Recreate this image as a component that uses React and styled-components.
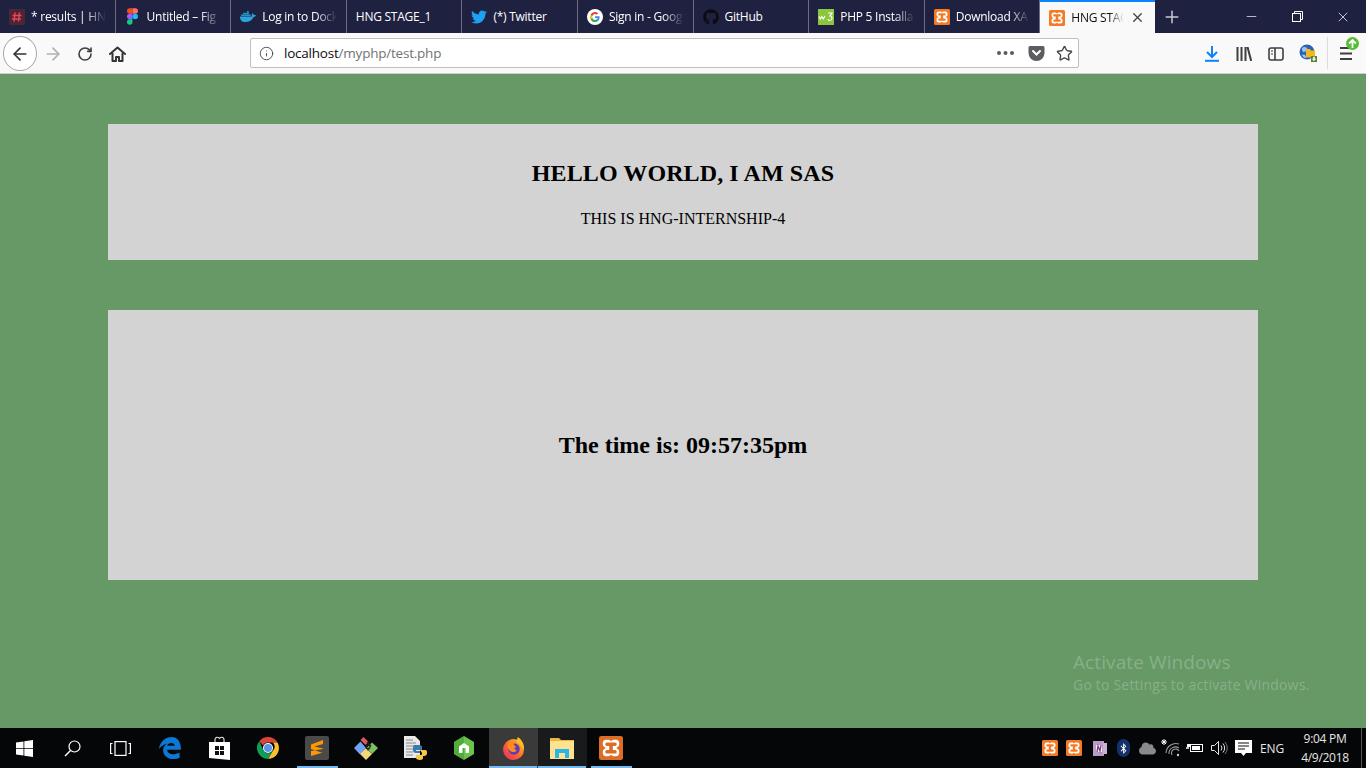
import React from "react";
import styled, { createGlobalStyle } from "styled-components";
import { ArrowLeft, ArrowRight, RotateCw, Info, Star, Plus, X, Minus } from "lucide-react";
import { FaTwitter, FaGithub, FaDocker, FaCloud, FaBluetoothB } from "react-icons/fa";

const Global = createGlobalStyle`
  html, body { margin: 0; padding: 0; background: #fff; }
  #root { width: 1366px; height: 768px; overflow: hidden; }
`;
const UI = `"Open Sans", "Noto Sans", sans-serif`;

const Screen = styled.div`
  position: relative; width: 1366px; height: 768px; display: flex; flex-direction: column;
  font-family: ${UI};
`;
const TabBar = styled.div`display: flex; height: 33px; background: #1f2141; align-items: stretch; flex: none;`;
const Tab = styled.div`
  width: ${p => (p.$active ? 115 : 115.6)}px; flex: none; box-sizing: border-box; display: flex; align-items: center;
  padding: 0 9px; gap: 6px; position: relative;
  background: ${p => (p.$active ? "#f9f9fa" : "transparent")};
  border-top: ${p => (p.$active ? "2px solid #0a84ff" : "none")};
  border-right: ${p => (p.$active ? "none" : "1px solid #6d6e83")};
  color: ${p => (p.$active ? "#0c0c0d" : "#fff")};
`;
const TabIcon = styled.span`width: 16px; height: 16px; flex: none; display: flex; align-items: center; justify-content: center;`;
const TabTitle = styled.span`
  font-size: 12px; white-space: nowrap; overflow: hidden; flex: 1; letter-spacing: -0.25px; line-height: 16px;
  ${p => p.$fade && `
    -webkit-mask-image: linear-gradient(to right, #000 72%, transparent 100%);
    mask-image: linear-gradient(to right, #000 72%, transparent 100%);
  `}
`;
const TabClose = styled.span`display: flex; color: #444; margin-right: 1px;`;
const NewTab = styled.div`width: 34px; display: flex; align-items: center; justify-content: center; color: #c9c9d0;`;
const WindowControls = styled.div`display: flex; margin-left: auto;`;
const WinBtn = styled.div`width: 46px; height: 33px; display: flex; align-items: center; justify-content: center; color: #fff;`;

const Toolbar = styled.div`
  height: 40px; flex: none; background: #f9f9fa; border-bottom: 1px solid #cfcfd2;
  display: flex; align-items: center; padding-left: 3px; padding-right: 4px;
`;
const BackBtn = styled.div`
  width: 32px; height: 33px; border-radius: 50%; border: 1px solid #a8a8ab; background: #fff; color: #333;
  display: flex; align-items: center; justify-content: center; flex: none; margin-top: 1px;
`;
const ToolBtn = styled.div`
  width: 32px; height: 32px; flex: none; display: flex; align-items: center; justify-content: center; position: relative;
  color: ${p => p.$color || "#3f3f41"}; margin-top: 1px;
`;
const UrlBar = styled.div`
  width: 829px; height: 30px; box-sizing: border-box; margin-left: 117px; flex: none; background: #fff;
  border: 1px solid #bfbfc2; border-radius: 2px; display: flex; align-items: center; padding: 0 5px 0 8px; margin-top: 0;
`;
const UrlText = styled.div`font-size: 13.5px; color: #0c0c0d; margin-left: 10px; letter-spacing: -0.22px; flex: 1;`;
const UrlPath = styled.span`color: #737373;`;
const UrlIcons = styled.div`display: flex; align-items: center; gap: 11px; color: #4a4a4f;`;
const Dots = styled.svg`margin-right: 3px;`;
const ToolRight = styled.div`display: flex; align-items: center; margin-left: auto;`;
const ToolSep = styled.div`width: 1px; height: 32px; background: #dcdcde; margin: 0 2px 0 3px;`;
const UpdateBadge = styled.span`
  position: absolute; top: -1px; right: 3px; width: 13px; height: 13px; border-radius: 50%; background: #57bd35;
  display: flex; align-items: center; justify-content: center; color: #fff;
`;

const Page = styled.main`
  flex: 1; background: #669966; display: flex; flex-direction: column; align-items: center; gap: 50px; padding-top: 50px;
  font-family: "Liberation Serif", serif; color: #000;
`;
const Panel = styled.section`
  width: 1150px; height: ${p => p.$h}px; background: #d3d3d3; display: flex; flex-direction: column;
  align-items: center; justify-content: center;
`;
const Heading = styled.h2`font-size: 24px; line-height: 27px; margin: 0; font-weight: bold;`;
const Greeting = styled(Heading)`letter-spacing: 0.1px;`;
const Sub = styled.p`font-size: 16px; line-height: 18px; margin: 23px 0 0;`;
const PanelHead = styled(Panel)`justify-content: flex-start; padding-top: 36px; box-sizing: border-box;`;

const Watermark = styled.div`
  position: absolute; left: 1073px; top: 650px; color: rgba(255,255,255,0.24); font-family: "Open Sans", sans-serif;
`;
const WmTitle = styled.div`font-size: 19px; line-height: 24px; letter-spacing: 0.1px;`;
const WmSub = styled.div`font-size: 14px; line-height: 21px; letter-spacing: 0.2px;`;

const Taskbar = styled.footer`
  height: 40px; flex: none; background: #050607; display: flex; align-items: stretch; color: #fff;
`;
const Start = styled.div`width: 48px; flex: none; display: flex; align-items: center; justify-content: center;`;
const Apps = styled.div`display: flex; margin-left: 1.5px;`;
const AppSlot = styled.div`
  width: 49px; flex: none; position: relative; display: flex; align-items: center; justify-content: center;
  background: ${p => (p.$active ? "#3a3a3b" : p.$open ? "#191a1b" : "transparent")};
  &::after {
    content: ""; position: absolute; bottom: 0; height: 2px; background: #76b9ed;
    display: ${p => (p.$open || p.$running ? "block" : "none")};
    left: ${p => (p.$running ? "4px" : "0")}; right: ${p => (p.$running ? "4px" : "1px")};
  }
`;
const Tray = styled.div`display: flex; align-items: center; margin-left: auto; height: 100%;`;
const TrayItem = styled.div`width: ${p => p.$w || 24}px; flex: none; display: flex; justify-content: center; align-items: center; color: #d8d8d8;`;
const BtOval = styled.span`
  width: 13px; height: 18px; border-radius: 7px; background: #13316b; display: flex; align-items: center; justify-content: center; color: #fff;
`;
const Lang = styled.div`width: 34px; text-align: center; font-size: 12px; color: #e6e6e6; letter-spacing: -0.2px;`;
const Clock = styled.div`width: 72px; text-align: center; font-size: 12px; line-height: 19px; color: #e6e6e6; letter-spacing: -0.3px;`;
const ShowDesk = styled.div`width: 4px; height: 100%; border-left: 1px solid #555;`;

/* ---------- drawn icons ---------- */
const Xampp = ({ s = 16, fill = "#f57a26" }) => (
  <svg width={s} height={s} viewBox="0 0 16 16">
    <rect width="16" height="16" rx="1.500" fill={fill} />
    <path d="M4.600 2.500h1.800c.7 0 1 .8 1.600.8s.9-.8 1.600-.8h1.800c1.300 0 2.100 1 2.100 2.300v.6c0 1.200-.7 2-1.700 2.300v.6c1 .3 1.700 1.100 1.700 2.300v.6c0 1.300-.8 2.300-2.100 2.300H9.600c-.7 0-1-.8-1.600-.8s-.9.8-1.600.8H4.600c-1.300 0-2.100-1-2.100-2.300v-.6c0-1.200.7-2 1.700-2.300v-.6c-1-.3-1.700-1.100-1.700-2.300v-.6c0-1.300.8-2.300 2.100-2.300z" fill="#fff" />
    <rect x="4.200" y="4.300" width="7.600" height="2.300" rx="1.100" fill={fill} />
    <rect x="4.200" y="9.400" width="7.600" height="2.300" rx="1.100" fill={fill} />
    <rect x="6.800" y="6" width="2.400" height="4" fill={fill} />
  </svg>
);
const Hash = () => (
  <svg width="16" height="16" viewBox="0 0 16 16">
    <rect width="16" height="16" rx="1" fill="#4b2638" />
    <path d="M6 3.500 5 12.500M10.500 3.500l-1 9M3.500 6.500h9M3 10h9" stroke="#f0444a" strokeWidth="1.500" />
  </svg>
);
const Figma = () => (
  <svg width="11" height="17" viewBox="0 0 12 18">
    <path d="M6 0H3a3 3 0 0 0 0 6h3z" fill="#f24e1e" />
    <path d="M6 0h3a3 3 0 0 1 0 6H6z" fill="#ff7262" />
    <path d="M6 6H3a3 3 0 0 0 0 6h3z" fill="#a259ff" />
    <circle cx="9" cy="9" r="3" fill="#1abcfe" />
    <path d="M6 12H3a3 3 0 1 0 3 3z" fill="#0acf83" />
  </svg>
);
const GoogleG = () => (
  <svg width="16" height="16" viewBox="0 0 16 16">
    <circle cx="8" cy="8" r="8" fill="#fff" />
    <path d="M12.600 8.200c0-.4 0-.7-.1-1H8v1.900h2.600c-.1.600-.5 1.200-1 1.500v1.200h1.600c.9-.9 1.400-2.100 1.400-3.600z" fill="#4285f4" />
    <path d="M8 13c1.300 0 2.400-.4 3.200-1.200l-1.600-1.200c-.4.300-1 .500-1.600.500-1.200 0-2.300-.8-2.600-2H3.700v1.300C4.500 12 6.100 13 8 13z" fill="#34a853" />
    <path d="M5.400 9.100c-.2-.7-.2-1.400 0-2.100V5.700H3.700c-.7 1.400-.7 3.200 0 4.600z" fill="#fbbc05" />
    <path d="M8 5c.7 0 1.300.2 1.800.7l1.400-1.400C10.300 3.500 9.200 3 8 3 6.100 3 4.500 4.100 3.700 5.700L5.400 7C5.700 5.800 6.800 5 8 5z" fill="#ea4335" />
  </svg>
);
const W3 = () => (
  <svg width="16" height="16" viewBox="0 0 16 16">
    <rect width="16" height="16" fill="#8cc63f" />
    <path d="M1 7.500l1.300 2.500 1.500-2.500L5.300 10l1.700-3" fill="none" stroke="#fff" strokeWidth="1.100" />
    <path d="M10 4h4l-2 3c1.500 0 2 1 2 2s-1 2.500-2.200 2.500S10 10.800 10 10" fill="none" stroke="#fff" strokeWidth="1.200" />
  </svg>
);
const Pocket = () => (
  <svg width="17" height="16" viewBox="0 0 17 16">
    <path d="M2 1h13a1.500 1.500 0 0 1 1.500 1.500V8a8 8 0 0 1-16 0V2.500A1.500 1.500 0 0 1 2 1z" fill="#5c5c61" />
    <path d="M5 6l3.500 3.500L12 6" fill="none" stroke="#fff" strokeWidth="2" strokeLinecap="round" />
  </svg>
);
const Home = () => (
  <svg width="17" height="16" viewBox="0 0 17 16" fill="none" stroke="#333" strokeWidth="2">
    <path d="M1 8l7.500-6.500L16 8" strokeLinecap="round" strokeLinejoin="round" />
    <path d="M3.500 7v8h3.500v-4h3v4h3.500V7" strokeLinejoin="round" />
  </svg>
);
const DownloadIcon = () => (
  <svg width="14" height="17" viewBox="0 0 14 17" fill="none" stroke="#0a84ff" strokeWidth="2">
    <path d="M7 1v10M2 7l5 5 5-5" />
    <path d="M0 15.800h14" />
  </svg>
);
const Library = () => (
  <svg width="16" height="14" viewBox="0 0 16 14" fill="none" stroke="#3f3f41" strokeWidth="2">
    <path d="M1.500 0v14M5.500 0v14M9.500 0v14M11.500 0l3.700 14" />
  </svg>
);
const Sidebar = () => (
  <svg width="16" height="14" viewBox="0 0 16 14" fill="none" stroke="#3f3f41" strokeWidth="1.600">
    <rect x="1" y="1" width="14" height="12" rx="2" />
    <path d="M7 1v12" />
    <path d="M3 4h2M3 7h2" strokeWidth="1.200" />
  </svg>
);
const Extension = () => (
  <svg width="19" height="19" viewBox="0 0 19 19">
    <circle cx="8" cy="8" r="7.500" fill="#2a62b8" />
    <path d="M3 4c2-1.500 4-1 5 0s-1 4-3 4-2-2-2-4zM3 11c2-1 4 0 4 2s-2 1.500-4-2z" fill="#9cc3ee" />
    <path d="M7 5h4l1 1.500h4v7H7z" fill="#f2b91a" />
    <path d="M12 12h6v6h-6z" fill="#5d7f34" />
    <path d="M14 12.800h2v2h1.300L15 17.300l-2.300-2.500H14z" fill="#e8f2d8" />
  </svg>
);
const Hamburger = () => (
  <svg width="12" height="14" viewBox="0 0 12 14" stroke="#3f3f41" strokeWidth="2">
    <path d="M0 1h9M0 6.500h12M0 12h12" />
  </svg>
);
const UpArrow = () => (
  <svg width="9" height="9" viewBox="0 0 8 8" fill="none" stroke="#fff" strokeWidth="1.600"><path d="M4 8V1M1 4l3-3 3 3" /></svg>
);
const Restore = () => (
  <svg width="11" height="11" viewBox="0 0 11 11" fill="none" stroke="#fff">
    <rect x=".5" y="2.500" width="8" height="8" />
    <path d="M2.500 2.500v-2h8v8h-2" />
  </svg>
);
const Windows = () => (
  <svg width="17" height="17" viewBox="0 0 17 17" fill="#fff">
    <path d="M0 2.500 7.500 1.400V8H0zM8.300 1.300 17 0v8H8.300zM0 8.800h7.500v6.800L0 14.500zM8.300 8.800H17V17l-8.700-1.300z" />
  </svg>
);
const SearchIcon = () => (
  <svg width="17" height="17" viewBox="0 0 17 17" fill="none" stroke="#fff" strokeWidth="1.200">
    <circle cx="10.500" cy="6.500" r="5.500" /><path d="M6.500 10.500 1 16" strokeWidth="1.500" />
  </svg>
);
const TaskView = () => (
  <svg width="21" height="15" viewBox="0 0 21 15" fill="none" stroke="#fff" strokeWidth="1.200">
    <rect x="5" y=".6" width="11" height="13.800" />
    <path d="M2.500 2.500H.6v10h1.900M18.500 2.500h1.900v10h-1.900" />
  </svg>
);
const Edge = () => (
  <svg width="22" height="22" viewBox="0 0 24 24">
    <path fillRule="evenodd" fill="#0a78d4" d="M0 13C1 5 7 0 14 0c6 0 10 5 10 14H9c0 5 7 6.500 13.500 3v5.500c-9 4-18 0-18-8C4.500 11 7 8 9 7 6 8 2 10 0 13zM9 9.500h8c0-4-7-4-8 0z" />
  </svg>
);
const Store = () => (
  <svg width="21" height="24" viewBox="0 0 21 24">
    <path d="M6 7V3.500C6 1 9 .5 10.500 2.500 12 .5 15 1 15 3.500V7" fill="none" stroke="#ddd" strokeWidth="1.200" />
    <path d="M0 6h21v18L0 22z" fill="#fff" />
    <path d="M6 10h4v4H6zM11 10h4v4h-4zM6 15h4v4H6zM11 15h4v4h-4z" fill="#111" />
  </svg>
);
const Chrome = () => (
  <svg width="22" height="22" viewBox="0 0 22 22">
    <path d="M11 0a11 11 0 0 1 9.500 5.500H11a5.500 5.500 0 0 0-5 3L2.300 4.300A11 11 0 0 1 11 0z" fill="#db4437" />
    <path d="M20.500 5.500A11 11 0 0 1 11 22l4.800-8.200a5.500 5.500 0 0 0 0-8.300z" fill="#fbc02d" />
    <path d="M2.300 4.300 6.500 13.500A5.500 5.500 0 0 0 15.800 13.800L11 22A11 11 0 0 1 2.300 4.300z" fill="#0f9d58" />
    <circle cx="11" cy="11" r="5" fill="#fff" />
    <circle cx="11" cy="11" r="4" fill="#5a95ee" />
  </svg>
);
const Sublime = () => (
  <svg width="24" height="24" viewBox="0 0 24 24">
    <rect width="24" height="24" rx="2" fill="#4a4a4a" />
    <path d="M18 4 6 8.500V13l12 4v-4.500L9.500 10.500 18 8zM6 15l12-2v3.500L6 20z" fill="#ff9800" />
  </svg>
);
const GitGui = () => (
  <svg width="24" height="24" viewBox="0 0 24 24">
    <path d="M0 12 6.500 5.500 12 12l-6 6.500z" fill="#6ea4f5" />
    <path d="M6.500 4l3-3 5 5-3 3z" fill="#e05a5a" />
    <path d="M6 18l6-6 6 6-6 6z" fill="#f1d775" />
    <path d="M12.500 12 18 6.500 24 12l-6 6z" fill="#7fbf5e" />
    <path d="M13 6l4 4M14 14.500v-3M16 11a2 2 0 1 0 0 .1" stroke="#222" strokeWidth="1.300" fill="none" />
  </svg>
);
const PyDoc = () => (
  <svg width="24" height="24" viewBox="0 0 24 24">
    <path d="M1 0h11l5 5v17H1z" fill="#e9e9e9" />
    <path d="M3 4h7M3 7h10M3 10h10M3 13h7M3 16h7M3 19h7" stroke="#888" />
    <path d="M11 9h5c2 0 3 1 3 2v3h-6v1h4v2h-4c-2 0-3-1-3-3v-2c0-2 1-3 1-3z" fill="#3a7ab0" />
    <path d="M17 14h5c2 0 2 1 2 3s-1 3-3 3h-1v2c0 1-1 2-3 2s-4-1-4-2v-3h5c1 0 1-1 1-2z" fill="#f6c945" />
  </svg>
);
const NodeHex = () => (
  <svg width="20" height="24" viewBox="0 0 20 24">
    <path d="M10 0 20 6v12l-10 6-10-6V6z" fill="#6cc24a" />
    <path d="M10 0v24L0 18V6z" fill="#3f9e2e" opacity=".6" />
    <path d="M5 17V10.500L10 7l5 3.500V17h-3.500v-5h-3v5z" fill="#fff" />
  </svg>
);
const Firefox = () => (
  <svg width="23" height="23" viewBox="0 0 22 22">
    <defs>
      <linearGradient id="ffg" x1="1" y1="0" x2="0" y2="1">
        <stop offset="0" stopColor="#ffd21f" /><stop offset=".5" stopColor="#ff6a2b" /><stop offset="1" stopColor="#e3246f" />
      </linearGradient>
    </defs>
    <circle cx="11" cy="12" r="10" fill="url(#ffg)" />
    <path d="M15 0c4 2.500 6.500 7 6 12-2-3-4-6-7-7z" fill="#ffc01e" />
    <circle cx="11.500" cy="11.500" r="5.500" fill="#5b3db8" />
    <path d="M6 6c2-2.500 5-3 7.500-2L11 7l2.500 2.500-2 1.500 2.500 2c-2 2.500-6 1.500-7.500-1C5 10 5.500 8 6 6z" fill="#ff8a1f" />
  </svg>
);
const Folder = () => (
  <svg width="24" height="22" viewBox="0 0 24 22">
    <path d="M0 1h9l2 2h13v4H0z" fill="#e8b93f" />
    <path d="M0 4h24v18H0z" fill="#ffe28f" />
    <path d="M5 21v-9h14v9h-4v-5H9v5z" fill="#29b6e8" />
  </svg>
);
const OneNote = () => (
  <svg width="17" height="17" viewBox="0 0 17 17">
    <path d="M2 1h11v15H2z" fill="#b89bc9" />
    <path d="M12 3h4v11h-4z" fill="#c9b4d8" />
    <path d="M5 5h6v7H5z" fill="#fff" opacity=".9" />
    <path d="M6 12l1-6 2 5 1-6" fill="none" stroke="#80397b" strokeWidth="1.300" />
  </svg>
);
const Wifi = () => (
  <svg width="20" height="18" viewBox="0 0 20 18" fill="none" stroke="#9a9a9a" strokeWidth="1.100">
    <path d="M5 14a10 10 0 0 1 13-9M8 15a6.500 6.500 0 0 1 10-6M11 16a3.500 3.500 0 0 1 7-4" />
    <path d="M0 3h6M3 0v6M1 1l4 4M5 1 1 5" stroke="#fff" strokeWidth="1" />
    <circle cx="17" cy="16" r="1.200" fill="#ccc" stroke="none" />
  </svg>
);
const Battery = () => (
  <svg width="18" height="14" viewBox="0 0 18 14" fill="none" stroke="#fff">
    <rect x="4.500" y="3.500" width="12" height="7" />
    <path d="M6 5h8v4H6z" fill="#fff" stroke="none" />
    <path d="M0 7h3" strokeWidth="1.500" />
    <path d="M1 3v3h3V3z" fill="#fff" stroke="none" />
  </svg>
);
const Volume = () => (
  <svg width="17" height="14" viewBox="0 0 17 14" fill="none" stroke="#e4e4e4">
    <path d="M.5 4.500h3l4-4v13l-4-4h-3z" />
    <path d="M10 4.500a4 4 0 0 1 0 5M12 2.500a7 7 0 0 1 0 9" />
    <path d="M14 1a9 9 0 0 1 0 12" stroke="#777" />
  </svg>
);
const Notify = () => (
  <svg width="17" height="17" viewBox="0 0 17 17">
    <path d="M0 0h17v13h-6l-2.500 3L6 13H0z" fill="#fff" />
    <path d="M3 3h11M3 6h11M3 9h7" stroke="#111" />
  </svg>
);

const tabs = [
  { t: "* results | HNG", i: <Hash />, fade: true },
  { t: "Untitled – Fig", i: <Figma />, fade: true },
  { t: "Log in to Dock", i: <FaDocker size={17} color="#2aa5de" />, fade: true },
  { t: "HNG STAGE_1" },
  { t: "(*) Twitter", i: <FaTwitter size={16} color="#1da1f2" /> },
  { t: "Sign in - Goog", i: <GoogleG />, fade: true },
  { t: "GitHub", i: <FaGithub size={16} color="#0c0c10" /> },
  { t: "PHP 5 Installa", i: <W3 />, fade: true },
  { t: "Download XA", i: <Xampp />, fade: true },
];

export default function App() {
  return (
    <Screen>
      <Global />
      <TabBar>
        {tabs.map(tab => (
          <Tab key={tab.t}>
            {tab.i && <TabIcon>{tab.i}</TabIcon>}
            <TabTitle $fade={tab.fade}>{tab.t}</TabTitle>
          </Tab>
        ))}
        <Tab $active>
          <TabIcon><Xampp /></TabIcon>
          <TabTitle $fade>HNG STAG</TabTitle>
          <TabClose><X size={15} strokeWidth={2.2} /></TabClose>
        </Tab>
        <NewTab><Plus size={20} strokeWidth={1.8} /></NewTab>
        <WindowControls>
          <WinBtn><Minus size={15} strokeWidth={1.1} /></WinBtn>
          <WinBtn><Restore /></WinBtn>
          <WinBtn><X size={16} strokeWidth={1.1} /></WinBtn>
        </WindowControls>
      </TabBar>
      <Toolbar>
        <BackBtn><ArrowLeft size={20} strokeWidth={2} /></BackBtn>
        <ToolBtn $color="#b1b1b3"><ArrowRight size={20} strokeWidth={2} /></ToolBtn>
        <ToolBtn><RotateCw size={16} strokeWidth={2.4} /></ToolBtn>
        <ToolBtn><Home /></ToolBtn>
        <UrlBar>
          <Info size={15} strokeWidth={1.5} color="#4a4a4f" />
          <UrlText>localhost<UrlPath>/myphp/test.php</UrlPath></UrlText>
          <UrlIcons>
            <Dots width="17" height="4" viewBox="0 0 17 4" fill="#5c5c61"><circle cx="2" cy="2" r="2" /><circle cx="8.500" cy="2" r="2" /><circle cx="15" cy="2" r="2" /></Dots>
            <Pocket />
            <Star size={17} strokeWidth={2} color="#4a4a4f" />
          </UrlIcons>
        </UrlBar>
        <ToolRight>
          <ToolBtn><DownloadIcon /></ToolBtn>
          <ToolBtn><Library /></ToolBtn>
          <ToolBtn><Sidebar /></ToolBtn>
          <ToolBtn><Extension /></ToolBtn>
          <ToolSep />
          <ToolBtn><Hamburger /><UpdateBadge><UpArrow /></UpdateBadge></ToolBtn>
        </ToolRight>
      </Toolbar>
      <Page>
        <PanelHead $h={136}>
          <Greeting>HELLO WORLD, I AM SAS</Greeting>
          <Sub>THIS IS HNG-INTERNSHIP-4</Sub>
        </PanelHead>
        <Panel $h={270}>
          <Heading>The time is: 09:57:35pm</Heading>
        </Panel>
      </Page>
      <Watermark>
        <WmTitle>Activate Windows</WmTitle>
        <WmSub>Go to Settings to activate Windows.</WmSub>
      </Watermark>
      <Taskbar>
        <Start><Windows /></Start>
        <Start><SearchIcon /></Start>
        <Start><TaskView /></Start>
        <Apps>
          <AppSlot><Edge /></AppSlot>
          <AppSlot><Store /></AppSlot>
          <AppSlot><Chrome /></AppSlot>
          <AppSlot $running><Sublime /></AppSlot>
          <AppSlot><GitGui /></AppSlot>
          <AppSlot><PyDoc /></AppSlot>
          <AppSlot><NodeHex /></AppSlot>
          <AppSlot $active $open><Firefox /></AppSlot>
          <AppSlot $open><Folder /></AppSlot>
          <AppSlot $running><Xampp s={24} fill="#dd6d24" /></AppSlot>
        </Apps>
        <Tray>
          <TrayItem $w={22}><Xampp /></TrayItem>
          <TrayItem $w={26}><Xampp /></TrayItem>
          <TrayItem><OneNote /></TrayItem>
          <TrayItem><BtOval><FaBluetoothB size={11} /></BtOval></TrayItem>
          <TrayItem><FaCloud size={17} color="#8a8a8a" /></TrayItem>
          <TrayItem><Wifi /></TrayItem>
          <TrayItem><Battery /></TrayItem>
          <TrayItem><Volume /></TrayItem>
          <TrayItem><Notify /></TrayItem>
          <Lang>ENG</Lang>
          <Clock>9:04 PM<br />4/9/2018</Clock>
          <ShowDesk />
        </Tray>
      </Taskbar>
    </Screen>
  );
}
